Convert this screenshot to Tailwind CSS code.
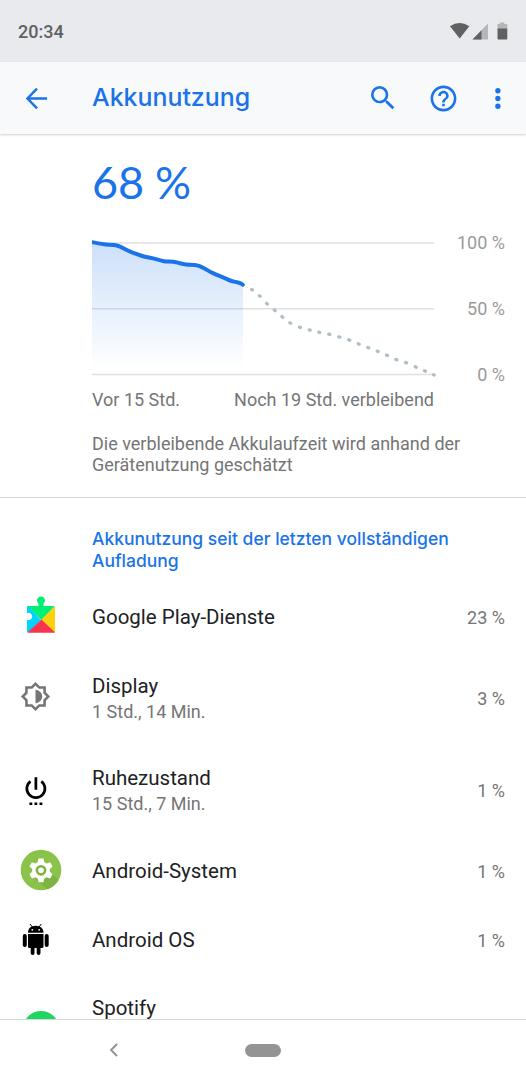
<!DOCTYPE html>
<html lang="de">
<head>
    <meta charset="UTF-8">
    <meta name="viewport" content="width=device-width, initial-scale=1.0">
    <title>Akkunutzung</title>
    <script src="https://cdn.jsdelivr.net/npm/@tailwindcss/browser@4"></script>
</head>
<body class="bg-white font-['Roboto',sans-serif] text-[#202124]">
<div class="w-[526px] h-[1080px] flex flex-col overflow-hidden">
    <!-- Status bar -->
    <div class="h-[62px] shrink-0 bg-[#e8eaed] flex items-center justify-between px-[18px]">
        <span class="text-[18px] font-medium text-[#5f6163]">20:34</span>
        <svg class="w-[60px] h-[18px]" viewBox="0 0 60 18">
            <path d="M2 4.200Q11.500 -2.200 21.300 4.200L11.700 16.500Z" fill="#5f6163"/>
            <path d="M40 1.500V17.500H24.500Z" fill="#b5b6b8"/>
            <path d="M33.500 8.200V17.500H24.500Z" fill="#5f6163"/>
            <path d="M49.500 2h2.300V.6h4.500V2H58.500q.8 0 .8.800V7H49.500Z" fill="#b5b6b8"/>
            <path d="M49.500 6.500h9.800V16.700q0 .8-.8.800h-8.200q-.8 0-.8-.8Z" fill="#5f6163"/>
        </svg>
    </div>

    <!-- App bar -->
    <header class="h-[72px] shrink-0 bg-[#f8f9fa] flex items-center pl-[21px] pr-[13px] text-[#1a73e8] shadow-[0_1px_2px_rgba(60,64,67,0.25)]">
        <svg class="w-[31px] h-[31px]" viewBox="0 0 24 24" fill="none" stroke="currentColor" stroke-width="1.900"><path d="M20.200 12H5.500M12.400 4.300 5 12l7.400 7.700"/></svg>
        <h1 class="ml-[40px] grow font-['Inter',sans-serif] text-[24.900px] font-medium">Akkunutzung</h1>
        <svg class="w-[32px] h-[32px] -mr-[1px]" viewBox="0 0 24 24" fill="currentColor"><path d="M15.500 14h-.79l-.28-.27A6.470 6.470 0 0 0 16 9.500 6.500 6.500 0 1 0 9.500 16c1.610 0 3.090-.59 4.230-1.570l.27.28v.79l5 4.990L20.490 19l-4.990-5zm-6 0C7.010 14 5 11.990 5 9.500S7.010 5 9.500 5 14 7.010 14 9.500 11.990 14 9.500 14z"/></svg>
        <svg class="w-[31px] h-[31px] ml-[30px]" viewBox="0 0 24 24" fill="currentColor"><path d="M11 18h2v-2h-2v2zm1-16C6.480 2 2 6.480 2 12s4.480 10 10 10 10-4.480 10-10S17.520 2 12 2zm0 18c-4.410 0-8-3.590-8-8s3.590-8 8-8 8 3.590 8 8-3.590 8-8 8zm0-14c-2.210 0-4 1.790-4 4h2c0-1.100.9-2 2-2s2 .9 2 2c0 2-3 1.750-3 5h2c0-2.250 3-2.500 3-5 0-2.210-1.790-4-4-4z"/></svg>
        <svg class="w-[31px] h-[31px] ml-[23px]" viewBox="0 0 24 24" fill="currentColor"><circle cx="12.300" cy="6" r="2.050"/><circle cx="12.300" cy="12" r="2.050"/><circle cx="12.300" cy="18" r="2.050"/></svg>
    </header>

    <!-- Usage graph -->
    <section class="h-[364px] shrink-0 pl-[92px] pr-[21px] pt-[21px] border-b border-[#d8d8d8]">
        <div class="h-[54px] leading-[54px] text-[45px] font-['Lato',sans-serif] text-[#1a73e8] tracking-[-0.2px]">68 %</div>
        <div class="mt-[21px] flex justify-between h-[156px]">
            <svg class="w-[350px] h-[156px] shrink-0" viewBox="92 230 350 156" fill="none">
                <defs>
                    <linearGradient id="level" x1="0" y1="243" x2="0" y2="368" gradientUnits="userSpaceOnUse">
                        <stop offset="0" stop-color="#1a73e8" stop-opacity=".22"/>
                        <stop offset="1" stop-color="#1a73e8" stop-opacity="0"/>
                    </linearGradient>
                </defs>
                <path d="M92 242.900H434M92 308.700H434M92 374.500H434" stroke="#e0e0e0" stroke-width="1.500"/>
                <path d="M92 242.300L104 244L116 245.300L132 252L144 256L164 261.300L186 264.500L197 265.500L213 273L228 279.500L243 285V374H92Z" fill="url(#level)"/>
                <path d="M92 242.300C96 242.700 100 243.800 104 244.300S113 244.600 117 245.500C121 246.500 127 250.500 132 252.300S140 255.500 144 256.500S152 258 156 259.200S161 260.700 164 261.200S172 261.500 176 262.300S182 264 186 264.400S194 264.500 198 265.600C203 267 208 271 213 273.200S223 277.300 228 279.600S234 281.500 238 282.500Q241.500 283.300 242.800 284.800" stroke="#1a73e8" stroke-width="4" stroke-linecap="round" stroke-linejoin="round"/>
                <path d="M251.600 289.400l.8.600M259.300 295.700l.8.600M266.600 303.300l.8.800M274.300 309.900l.8.800M281.900 316.600l.8.800M289.900 322.700l.8.600M299.500 327.100l1 .4M309.200 329.900l1 .2M318.800 332.200l1 .2M328.800 334.200l1 .2M338.800 336.900l1 .2M348.800 339.800l1 .4M358.200 343.800l1 .4M367.800 347.500l1 .4M377.200 351.100l1 .4M386.500 355.100l1 .4M395.800 359.400l1 .4M405.500 362.500l1 .4M415.200 366.800l1 .4M424.500 370.800l1 .4M433.600 374.800l.6.200" stroke="#b0bec5" stroke-width="3.300" stroke-linecap="round"/>
            </svg>
            <div class="flex flex-col justify-between text-right text-[18px] leading-[24px] text-[#9a9a9a]">
                <span class="pt-px">100 %</span>
                <span>50 %</span>
                <span class="-mb-px">0 %</span>
            </div>
        </div>
        <div class="w-[342px] mt-[2px] flex justify-between text-[18px] leading-[24px] text-[#757575]">
            <span>Vor 15 Std.</span>
            <span>Noch 19 Std. verbleibend</span>
        </div>
        <p class="mt-[21px] text-[18px] leading-[21px] text-[#757575] whitespace-nowrap">Die verbleibende Akkulaufzeit wird anhand der<br>Gerätenutzung geschätzt</p>
    </section>

    <!-- App list -->
    <main class="h-[521px] shrink-0 overflow-hidden">
        <h2 class="h-[85px] pl-[92px] pt-[30px] font-['Inter',sans-serif] text-[17.500px] leading-[22px] font-medium text-[#1a73e8] whitespace-nowrap">Akkunutzung seit der letzten vollständigen<br>Aufladung</h2>
        <div class="h-[69px] flex items-center pr-[21px]">
            <div class="w-[92px] pl-[20px]">
                <svg class="w-[42px] h-[42px] -mt-[5px]" viewBox="0 0 42 42">
                    <path d="M7 13v6.300a3.600 3.600 0 1 1 0 6.400V37q0 1.500 1 1.800L21 26 8 11.800Q7 12 7 13Z" fill="#00d3ff"/>
                    <path d="M7.500 12h11V9.500a4 4 0 1 1 5 0V12h10.200q.8 0 1 .5L21.500 26Z" fill="#00f076"/>
                    <path d="M34.600 12.200q.4.300.4 1V37.800q0 .7-.5 1.100L21.500 25.600Z" fill="#ffd00d"/>
                    <path d="M21.500 25.400 34.800 38.300q-.4.400-1 .4H8.600q-.6 0-1-.4Z" fill="#f9344c"/>
                </svg>
            </div>
            <div class="grow text-[20.500px]">Google Play-Dienste</div>
            <div class="text-[18px] text-[#757575]">23 %</div>
        </div>
        <div class="h-[92px] flex items-center pr-[21px]">
            <div class="w-[92px] pl-[20px]">
                <svg class="w-[31px] h-[31px] -mt-[3px]" viewBox="0 0 24 24" fill="#757575"><path d="M20 15.310 23.310 12 20 8.690V4h-4.690L12 .69 8.690 4H4v4.690L.69 12 4 15.310V20h4.690L12 23.310 15.310 20H20v-4.690zM18 14.500V18h-3.500L12 20.500 9.500 18H6v-3.500L3.500 12 6 9.500V6h3.500L12 3.500 14.500 6H18v3.500l2.500 2.500Z"/><path d="M12 6.800c3 .3 5.200 2.500 5.200 5.200s-2.200 4.900-5.200 5.200Z"/></svg>
            </div>
            <div class="grow">
                <div class="text-[20.500px] leading-[26px]">Display</div>
                <div class="text-[18px] leading-[25px] text-[#757575]">1 Std., 14 Min.</div>
            </div>
            <div class="text-[18px] text-[#757575]">3 %</div>
        </div>
        <div class="h-[93px] flex items-center pr-[21px]">
            <div class="w-[92px] pl-[20px]">
                <svg class="w-[31px] h-[31px]" viewBox="0 0 24 24"><path d="M12.300 1.800v9.700M8.100 4.900A7 7 0 1 0 16.500 4.900" fill="none" stroke="#000" stroke-width="2.100"/><path d="M7.300 21.300h2.200v2H7.300zm3.900 0h2.200v2h-2.200zm3.900 0h2.200v2h-2.200z"/></svg>
            </div>
            <div class="grow">
                <div class="text-[20.500px] leading-[26px]">Ruhezustand</div>
                <div class="text-[18px] leading-[25px] text-[#757575]">15 Std., 7 Min.</div>
            </div>
            <div class="text-[18px] text-[#757575]">1 %</div>
        </div>
        <div class="h-[69px] flex items-center pr-[21px]">
            <div class="w-[92px] pl-[20px]">
                <svg class="w-[42px] h-[42px] -mt-[3px]" viewBox="0 0 42 42">
                    <circle cx="21" cy="21" r="20.300" fill="#8bc34a"/>
                    <path d="M31 24 38.500 31.300A20.300 20.300 0 0 1 27.500 40.200L15 30Z" fill="#7cb342"/>
                    <path d="M18.500 9.500h5l.7 3.600 2.400 1.400 3.500-1.200 2.500 4.300-2.800 2.400v2.800l2.800 2.400-2.500 4.300-3.500-1.200-2.400 1.400-.7 3.600h-5l-.7-3.600-2.400-1.400-3.500 1.200-2.500-4.300 2.800-2.400v-2.800l-2.800-2.400 2.500-4.300 3.500 1.200 2.400-1.400Z" fill="#fff"/>
                    <circle cx="21" cy="21.300" r="4.100" fill="#fff" stroke="#7cb342" stroke-width="2.600"/>
                </svg>
            </div>
            <div class="grow text-[20.500px]">Android-System</div>
            <div class="text-[18px] text-[#757575]">1 %</div>
        </div>
        <div class="h-[69px] flex items-center pr-[21px]">
            <div class="w-[92px] pl-[20px]">
                <svg class="w-[31px] h-[31px] -mt-[3px]" viewBox="0 0 31 31">
                    <path d="M8 8.800C8 5 10.500 1.800 15.700 1.800S23.500 5 23.500 8.800Z"/>
                    <path d="M10 0l2.300 3M21.300 0 19 3" stroke="#000" stroke-width="1"/>
                    <circle cx="12.300" cy="5.800" r=".9" fill="#fff"/><circle cx="19.200" cy="5.800" r=".9" fill="#fff"/>
                    <path d="M8 10h15.500v12.500q0 1.500-1.500 1.500H20.500v5a1.900 1.900 0 0 1-3.800 0V24h-2.200v5a1.900 1.900 0 0 1-3.800 0V24H9.500Q8 24 8 22.500Z"/>
                    <rect x="2.800" y="10" width="4" height="13" rx="2"/><rect x="24.700" y="10" width="4" height="13" rx="2"/>
                </svg>
            </div>
            <div class="grow text-[20.500px]">Android OS</div>
            <div class="text-[18px] text-[#757575]">1 %</div>
        </div>
        <div class="h-[93px] flex pt-[20px]">
            <div class="w-[92px] pl-[23px] pt-[16px]">
                <div class="size-[36px] rounded-full bg-[#1ed760]"></div>
            </div>
            <div class="grow text-[20.500px] leading-[26px]">Spotify</div>
        </div>
    </main>

    <!-- Navigation bar -->
    <nav class="grow border-t border-[#d8d8d8] bg-white flex items-center pl-[108px]">
        <svg class="w-[12px] h-[14px]" viewBox="0 0 12 14" fill="none" stroke="#8e8e8e" stroke-width="1.800"><path d="M9 1 3 7l6 6"/></svg>
        <div class="ml-[125px] w-[36px] h-[13px] rounded-full bg-[#949494]"></div>
    </nav>
</div>
</body>
</html>
